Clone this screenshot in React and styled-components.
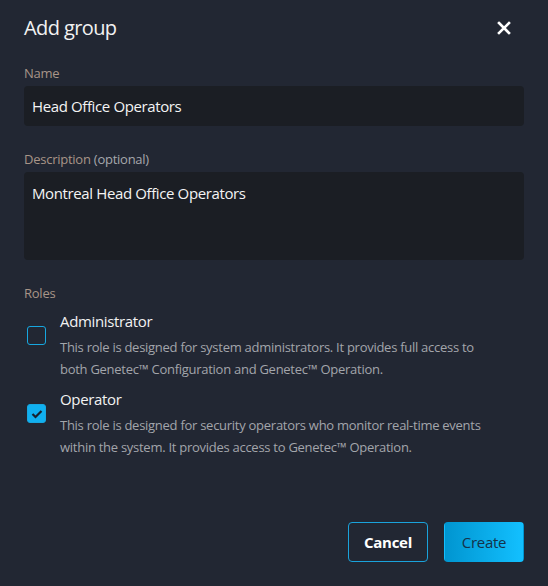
import React, { useState } from 'react';
import styled, { createGlobalStyle } from 'styled-components';

const GlobalStyle = createGlobalStyle`
  html, body {
    margin: 0;
    padding: 0;
    background: #222733;
  }
  * {
    box-sizing: border-box;
  }
`;

const roles = [
  {
    id: 'admin',
    name: 'Administrator',
    text: 'This role is designed for system administrators. It provides full access to both Genetec™ Configuration and Genetec™ Operation.',
  },
  {
    id: 'operator',
    name: 'Operator',
    text: 'This role is designed for security operators who monitor real-time events within the system. It provides access to Genetec™ Operation.',
  },
];

const App = () => {
  const [name, setName] = useState('Head Office Operators');
  const [description, setDescription] = useState('Montreal Head Office Operators');
  const [checked, setChecked] = useState({ admin: false, operator: true });

  const toggle = (id) => setChecked((prev) => ({ ...prev, [id]: !prev[id] }));

  return (
    <>
      <GlobalStyle />
      <StyledDialog>
        <StyledHeader>
          <StyledTitle>Add group</StyledTitle>
          <StyledClose aria-label="Close">
            <svg width="14" height="14" viewBox="0 0 14 14">
              <path d="M2 2L12 12M12 2L2 12" stroke="#fff" strokeWidth="2.6" strokeLinecap="square" />
            </svg>
          </StyledClose>
        </StyledHeader>

        <StyledField>
          <StyledLabel>Name</StyledLabel>
          <StyledInput value={name} onChange={(e) => setName(e.target.value)} />
        </StyledField>

        <StyledField>
          <StyledLabel>
            Description <StyledOptional>(optional)</StyledOptional>
          </StyledLabel>
          <StyledTextarea value={description} onChange={(e) => setDescription(e.target.value)} />
        </StyledField>

        <StyledField>
          <StyledLabel>Roles</StyledLabel>
          <StyledRoles>
            {roles.map((role) => (
              <StyledRole key={role.id} onClick={() => toggle(role.id)}>
                <StyledCheckbox checked={checked[role.id]}>
                  {checked[role.id] && (
                    <svg width="12" height="10" viewBox="0 0 12 10">
                      <path d="M1.5 5L4.5 8L10.5 2" fill="none" stroke="#17212e" strokeWidth="2.2" />
                    </svg>
                  )}
                </StyledCheckbox>
                <div>
                  <StyledRoleName>{role.name}</StyledRoleName>
                  <StyledRoleText>{role.text}</StyledRoleText>
                </div>
              </StyledRole>
            ))}
          </StyledRoles>
        </StyledField>

        <StyledFooter>
          <StyledButton>Cancel</StyledButton>
          <StyledButton primary>Create</StyledButton>
        </StyledFooter>
      </StyledDialog>
    </>
  );
};

const StyledDialog = styled.div`
  width: 548px;
  height: 586px;
  padding: 16px 24px 24px;
  display: flex;
  flex-direction: column;
  background: #222733;
  font-family: 'Open Sans', 'Noto Sans', sans-serif;
  color: #f2f2f2;
`;

const StyledHeader = styled.div`
  display: flex;
  justify-content: space-between;
  align-items: center;
  height: 24px;
  margin-bottom: 24px;
`;

const StyledTitle = styled.h1`
  margin: 0;
  font-size: 20px;
  font-weight: 400;
  line-height: 24px;
  letter-spacing: -0.6px;
`;

const StyledClose = styled.button`
  display: flex;
  align-items: center;
  justify-content: center;
  width: 24px;
  height: 24px;
  margin-right: 8px;
  padding: 0;
  border: none;
  background: none;
  cursor: pointer;
`;

const StyledField = styled.div`
  display: flex;
  flex-direction: column;
  gap: 4px;
  margin-bottom: 24px;
`;

const StyledLabel = styled.label`
  font-size: 13px;
  line-height: 18px;
  letter-spacing: -0.25px;
  color: #a89588;
`;

const StyledOptional = styled.span`
  color: #a6a8ad;
`;

const StyledInput = styled.input`
  height: 40px;
  padding: 0 8px;
  border: none;
  border-radius: 4px;
  background: #1b1e24;
  color: #f4f4f4;
  font: inherit;
  font-size: 15px;
  letter-spacing: -0.38px;
  outline: none;
`;

const StyledTextarea = styled.textarea`
  height: 88px;
  padding: 10px 8px;
  border: none;
  border-radius: 4px;
  background: #1b1e24;
  color: #f4f4f4;
  font: inherit;
  font-size: 15px;
  line-height: 22px;
  letter-spacing: -0.38px;
  resize: none;
  outline: none;
`;

const StyledRoles = styled.div`
  display: flex;
  flex-direction: column;
  gap: 8px;
  margin-top: 4px;
`;

const StyledRole = styled.div`
  display: flex;
  align-items: flex-start;
  gap: 14px;
  padding-left: 3px;
  cursor: pointer;
`;

const StyledCheckbox = styled.span`
  flex: none;
  display: flex;
  align-items: center;
  justify-content: center;
  width: 19px;
  height: 19px;
  margin-top: 16px;
  border-radius: 3px;
  border: 1.5px solid #17a7e0;
  background: ${(props) => (props.checked ? '#10b0f0' : 'transparent')};
`;

const StyledRoleName = styled.div`
  font-size: 15px;
  line-height: 22px;
  letter-spacing: -0.35px;
  margin-bottom: 4px;
`;

const StyledRoleText = styled.div`
  font-size: 13px;
  line-height: 22px;
  letter-spacing: -0.27px;
  color: #a2a5ab;
  max-width: 430px;
`;

const StyledFooter = styled.div`
  margin-top: auto;
  display: flex;
  justify-content: flex-end;
  gap: 16px;
`;

const StyledButton = styled.button`
  width: 80px;
  height: 40px;
  border-radius: 4px;
  font-family: inherit;
  font-size: 15px;
  letter-spacing: -0.3px;
  cursor: pointer;
  border: 1px solid ${(props) => (props.primary ? 'transparent' : '#1aa3dc')};
  background: ${(props) => (props.primary ? 'linear-gradient(90deg, #0095d0, #13c0ff)' : 'transparent')};
  color: ${(props) => (props.primary ? '#15324a' : '#ffffff')};
  font-weight: ${(props) => (props.primary ? 400 : 700)};
`;

export default App;
